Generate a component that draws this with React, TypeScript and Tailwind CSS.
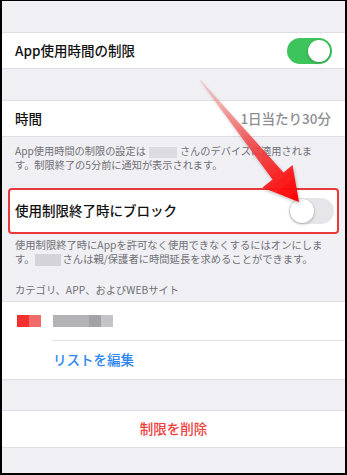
import React from "react";

function ToggleOn() {
  return (
    <div className="relative h-[26px] w-[45px] rounded-full bg-[#3ec45c]">
      <div className="absolute right-[2px] top-[2px] h-[22px] w-[22px] rounded-full bg-white shadow-[0_1px_3px_rgba(0,0,0,0.25)]" />
    </div>
  );
}

function ToggleOff() {
  return (
    <div className="relative h-[26px] w-[45px] rounded-full bg-[#e6e6ea]">
      <div className="absolute left-[1px] top-[1px] h-[24px] w-[24px] rounded-full bg-white shadow-[0_1px_3px_rgba(0,0,0,0.3)]" />
    </div>
  );
}

export default function App() {
  return (
    <div className="relative h-[475px] w-[347px] overflow-hidden border-t border-x-2 border-b-2 border-black bg-[#efeff4] font-['Noto_Sans_CJK_JP',sans-serif] text-[#111]">
      <div className="h-[31px]" />
      <div className="flex h-[37px] items-center justify-between border-y border-[#dedee2] bg-white pl-[13px] pr-[13px]">
        <span className="text-[13.5px] font-medium leading-none">App使用時間の制限</span>
        <ToggleOn />
      </div>
      <div className="h-[31px]" />
      <div className="flex h-[37px] items-center justify-between border-y border-[#dedee2] bg-white pl-[13px] pr-[14px]">
        <span className="text-[13.5px] font-medium leading-none">時間</span>
        <span className="text-[13.5px] font-medium leading-none text-[#8e8e93]">1日当たり30分</span>
      </div>
      <div className="h-[51px] pl-[13px] pt-[7px] text-[10.2px] leading-[13.5px] text-[#6f6f74]">
        <div className="whitespace-nowrap">
          App使用時間の制限の設定は
          <span className="mx-[3px] inline-block h-[11px] w-[28px] bg-[#dcdce0] align-middle" />
          さんのデバイスに適用されま
        </div>
        <div className="whitespace-nowrap">す。制限終了の5分前に通知が表示されます。</div>
      </div>
      <div className="mx-[6px] flex h-[46px] items-center justify-between rounded-[4px] border-2 border-[#e8383b] bg-white pl-[5px] pr-[3px]">
        <span className="text-[13.5px] font-medium leading-none">使用制限終了時にブロック</span>
        <ToggleOff />
      </div>
      <div className="pl-[13px] pt-[4px] text-[10.3px] leading-[14px] text-[#6f6f74]">
        <div className="whitespace-nowrap">使用制限終了時にAppを許可なく使用できなくするにはオンにしま</div>
        <div className="whitespace-nowrap">
          す。
          <span className="mr-[2px] inline-block h-[12px] w-[26px] bg-[#d4d4d8] align-middle" />
          さんは親/保護者に時間延長を求めることができます。
        </div>
      </div>
      <div className="h-[35px] pl-[13px] pt-[17px] text-[10.3px] leading-[14px] text-[#6f6f74]">
        <div className="whitespace-nowrap">カテゴリ、APP、およびWEBサイト</div>
      </div>
      <div className="border-y border-[#dedee2] bg-white">
        <div className="flex h-[38px] items-center pl-[15px]">
          <div className="flex h-[12px] w-[24px]">
            <div className="h-full w-[12px] bg-[#f2302f]" />
            <div className="h-full w-[12px] bg-[#f26b6b]" />
          </div>
          <div className="ml-[12px] flex h-[12px]">
            <div className="h-full w-[36px] bg-[#b3b3b5]" />
            <div className="h-full w-[12px] bg-[#a3a3a5]" />
            <div className="h-full w-[12px] bg-[#c4c4c6]" />
          </div>
        </div>
        <div className="ml-[50px] h-px bg-[#e3e3e7]" />
        <div className="flex h-[38px] items-center pl-[51px]">
          <span className="text-[13.5px] font-medium leading-none text-[#2f86ee]">リストを編集</span>
        </div>
      </div>
      <div className="h-[30px]" />
      <div className="flex h-[38px] items-center justify-center border-y border-[#dedee2] bg-white">
        <span className="text-[13.5px] font-medium leading-none text-[#f0403a]">制限を削除</span>
      </div>

      <svg className="pointer-events-none absolute left-[-2px] top-[-1px]" width="347" height="475" viewBox="0 0 347 475">
        <defs>
          <linearGradient id="ag" x1="200" y1="80" x2="297" y2="201" gradientUnits="userSpaceOnUse">
            <stop offset="0" stopColor="#f4a0a0" stopOpacity="0.4" />
            <stop offset="0.5" stopColor="#f04848" stopOpacity="0.85" />
            <stop offset="1" stopColor="#ff0000" />
          </linearGradient>
          <filter id="sh" x="-20%" y="-20%" width="140%" height="140%">
            <feDropShadow dx="1" dy="2" stdDeviation="1.5" floodColor="#000" floodOpacity="0.25" />
          </filter>
        </defs>
        <polygon
          filter="url(#sh)"
          fill="url(#ag)"
          points="199.6,80.3 200.4,79.7 283.5,172.4 292.5,165 299,202 262.5,187.5 272.5,179.5"
        />
      </svg>
    </div>
  );
}
